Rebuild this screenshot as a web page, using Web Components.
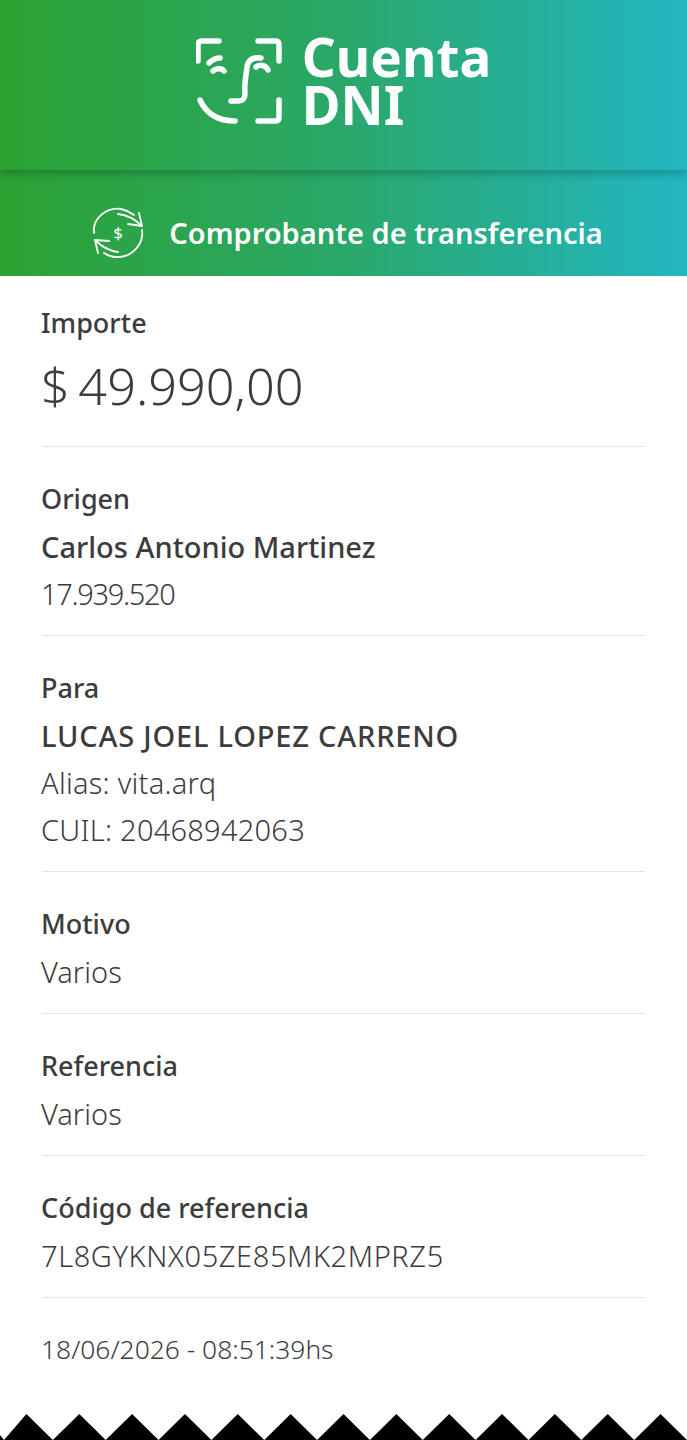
<!DOCTYPE html>
<html lang="es">
<head>
<meta charset="utf-8">
<title>Comprobante de transferencia</title>
<style>
  html, body { margin: 0; padding: 0; background: #fff; }
  body { font-family: "Noto Sans", sans-serif; color: #3c3c3c; }
</style>
</head>
<body>
<dni-header title-text="Comprobante de transferencia"></dni-header>
<receipt-list>
  <receipt-row first label="Importe">
    <receipt-line kind="amount">$ 49.990,00</receipt-line>
  </receipt-row>
  <receipt-row label="Origen">
    <receipt-line kind="name">Carlos Antonio Martinez</receipt-line>
    <receipt-line kind="dni">17.939.520</receipt-line>
  </receipt-row>
  <receipt-row label="Para">
    <receipt-line kind="caps">LUCAS JOEL LOPEZ CARRENO</receipt-line>
    <receipt-line kind="wide">Alias: vita.arq</receipt-line>
    <receipt-line kind="wide">CUIL: 20468942063</receipt-line>
  </receipt-row>
  <receipt-row label="Motivo">
    <receipt-line>Varios</receipt-line>
  </receipt-row>
  <receipt-row label="Referencia">
    <receipt-line>Varios</receipt-line>
  </receipt-row>
  <receipt-row label="Código de referencia">
    <receipt-line kind="code">7L8GYKNX05ZE85MK2MPRZ5</receipt-line>
  </receipt-row>
  <receipt-date>18/06/2026 - 08:51:39hs</receipt-date>
</receipt-list>
<torn-edge></torn-edge>

<script>
const headerTemplate = document.createElement("template");
headerTemplate.innerHTML = `
  <style>
    :host {
      display: block;
      background: linear-gradient(90deg, #2ca232 0%, #2aa86a 50%, #22b6c2 100%);
      color: #fff;
    }
    .brand {
      height: 170px;
      display: flex;
      justify-content: center;
      align-items: center;
      gap: 18px;
      padding: 0 0 8px 0;
      box-sizing: border-box;
      box-shadow: 0 4px 8px rgba(0, 0, 0, 0.22);
      position: relative;
    }
    .brand svg { width: 88px; height: 88px; display: block; }
    .brand-name { font: 700 53px/48px "Noto Sans", sans-serif; }
    .title {
      height: 106px;
      display: flex;
      justify-content: center;
      align-items: center;
      gap: 24px;
      padding: 20px 0 0 7px;
      box-sizing: border-box;
    }
    .title svg { width: 54px; height: 54px; display: block; }
    .title-text { font: 600 29px/40px "Noto Sans", sans-serif; }
  </style>
  <div class="brand">
    <svg viewBox="0 0 88 88" fill="none" stroke="#fff" stroke-width="5.5" stroke-linecap="round" stroke-linejoin="round">
      <path d="M23 4H6Q2 4 2 8V24"/>
      <path d="M62 4H80Q83 4 83 8V24"/>
      <path d="M62 84H80Q83 84 83 80V63"/>
      <path d="M4 63C10 76 22 84 39 84"/>
      <path d="M13 26C16 23 19 21 24 21"/>
      <path d="M17 34C20 31 26 31 28 34"/>
      <path d="M65 21C57 20 52 23 51 30C50 40 48 46 49 56C49 62 47 64 42 64H35"/>
      <path d="M60 30C63 27 70 28 72 33"/>
    </svg>
    <div class="brand-name">Cuenta<br>DNI</div>
  </div>
  <div class="title">
    <svg viewBox="0 0 54 54" fill="none" stroke="#fff" stroke-width="1.8" stroke-linecap="round" stroke-linejoin="round">
      <path d="M3 27C1 12 16 1 30 3C35 4 39 6 43 9"/>
      <path d="M51 24C53 38 41 52 25 51C20 51 16 49 13 47"/>
      <path d="M27 8C36 9 44 13 51 20"/>
      <path d="M48 7L51 20L37 18"/>
      <path d="M27 46C19 45 11 41 4 34"/>
      <path d="M18 35L4 34L7 47"/>
      <text x="27" y="33" font-family="'Noto Sans', sans-serif" font-size="17" font-weight="400" fill="#fff" stroke="none" text-anchor="middle">$</text>
    </svg>
    <span class="title-text"></span>
  </div>
`;

class DniHeader extends HTMLElement {
  constructor() {
    super();
    this.attachShadow({ mode: "open" });
    this.shadowRoot.appendChild(headerTemplate.content.cloneNode(true));
    this.shadowRoot.querySelector(".title-text").textContent = this.getAttribute("title-text");
  }
}

const listTemplate = document.createElement("template");
listTemplate.innerHTML = `
  <style>
    :host {
      display: block;
      padding: 24px 42px 0;
      color: #3c3c3c;
    }
  </style>
  <slot></slot>
`;

class ReceiptList extends HTMLElement {
  constructor() {
    super();
    this.attachShadow({ mode: "open" });
    this.shadowRoot.appendChild(listTemplate.content.cloneNode(true));
  }
}

const rowTemplate = document.createElement("template");
rowTemplate.innerHTML = `
  <style>
    :host {
      display: block;
      padding: 29px 0 18px;
      border-bottom: 1px solid #e3e3e3;
    }
    :host([first]) { padding-top: 0; padding-bottom: 21px; }
    .label {
      font: 500 27px/45px "Noto Sans", sans-serif;
      margin: 0 0 2px -1px;
      color: #3c3c3c;
    }
  </style>
  <div class="label"></div>
  <slot></slot>
`;

class ReceiptRow extends HTMLElement {
  constructor() {
    super();
    this.attachShadow({ mode: "open" });
    this.shadowRoot.appendChild(rowTemplate.content.cloneNode(true));
    this.shadowRoot.querySelector(".label").textContent = this.getAttribute("label");
  }
}

const lineTemplate = document.createElement("template");
lineTemplate.innerHTML = `
  <style>
    :host {
      display: block;
      margin-left: -1px;
      font: 300 29px/47px "Noto Sans", sans-serif;
      color: #3c3c3c;
      white-space: nowrap;
    }
    :host([kind="name"]) { font-weight: 500; }
    :host([kind="caps"]) { font-weight: 500; letter-spacing: 0.8px; }
    :host([kind="dni"]) { letter-spacing: -1.3px; }
    :host([kind="wide"]) { letter-spacing: 0.25px; }
    :host([kind="code"]) { letter-spacing: 0.6px; }
    :host([kind="amount"]) { font-size: 50.4px; line-height: 78px; word-spacing: -4.5px; }
  </style>
  <slot></slot>
`;

class ReceiptLine extends HTMLElement {
  constructor() {
    super();
    this.attachShadow({ mode: "open" });
    this.shadowRoot.appendChild(lineTemplate.content.cloneNode(true));
  }
}

const dateTemplate = document.createElement("template");
dateTemplate.innerHTML = `
  <style>
    :host {
      display: block;
      padding-top: 29px;
      margin-left: -1px;
      font: 300 26.4px/44px "Noto Sans", sans-serif;
      color: #3c3c3c;
    }
  </style>
  <slot></slot>
`;

class ReceiptDate extends HTMLElement {
  constructor() {
    super();
    this.attachShadow({ mode: "open" });
    this.shadowRoot.appendChild(dateTemplate.content.cloneNode(true));
  }
}

const edgeTemplate = document.createElement("template");
edgeTemplate.innerHTML = `
  <style>
    :host {
      display: block;
      position: absolute;
      left: 0;
      top: 1414px;
      width: 687px;
      height: 26px;
    }
    svg { display: block; width: 100%; height: 100%; }
  </style>
  <svg viewBox="0 0 687 26" preserveAspectRatio="none"><polygon fill="#000"></polygon></svg>
`;

class TornEdge extends HTMLElement {
  constructor() {
    super();
    this.attachShadow({ mode: "open" });
    this.shadowRoot.appendChild(edgeTemplate.content.cloneNode(true));
    const teeth = 13;
    const step = 687 / teeth;
    const points = ["0,26", "0,21", "4,26"];
    for (let i = 0; i < teeth; i++) {
      points.push(`${(i + 0.5) * step},0`, `${(i + 1) * step},26`);
    }
    this.shadowRoot.querySelector("polygon").setAttribute("points", points.join(" "));
  }
}

customElements.define("dni-header", DniHeader);
customElements.define("receipt-list", ReceiptList);
customElements.define("receipt-row", ReceiptRow);
customElements.define("receipt-line", ReceiptLine);
customElements.define("receipt-date", ReceiptDate);
customElements.define("torn-edge", TornEdge);
</script>
</body>
</html>
